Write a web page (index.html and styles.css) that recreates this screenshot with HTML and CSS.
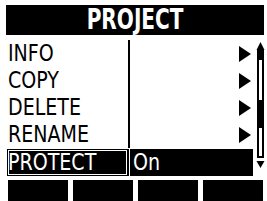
FILE: index.html
```html
<!DOCTYPE html>
<html lang="en">
<head>
    <meta charset="UTF-8">
    <title>PROJECT</title>
    <link rel="stylesheet" href="styles.css">
</head>
<body>
    <div class="screen">
        <div class="title"><span>PROJECT</span></div>

        <div class="body">
            <div class="menu">
                <div class="row">
                    <div class="label"><span>INFO</span></div>
                    <div class="value"></div>
                    <div class="more"><i class="arrow"></i></div>
                </div>
                <div class="row">
                    <div class="label"><span>COPY</span></div>
                    <div class="value"></div>
                    <div class="more"><i class="arrow"></i></div>
                </div>
                <div class="row">
                    <div class="label"><span>DELETE</span></div>
                    <div class="value"></div>
                    <div class="more"><i class="arrow"></i></div>
                </div>
                <div class="row">
                    <div class="label"><span>RENAME</span></div>
                    <div class="value"></div>
                    <div class="more"><i class="arrow"></i></div>
                </div>
                <div class="row selected">
                    <div class="label"><span>PROTECT</span></div>
                    <div class="value"><span>On</span></div>
                    <div class="more"></div>
                </div>
            </div>

            <!-- scroll indicator -->
            <svg class="scroll" width="9" height="127" viewBox="0 0 9 127">
                <polygon points="4.5,0 0.5,8 8.5,8" fill="#000"/>
                <rect x="1" y="8" width="7" height="108" fill="#000"/>
                <rect x="3" y="18" width="3" height="40" fill="#fff"/>
                <rect x="3" y="86" width="3" height="28" fill="#fff"/>
                <polygon points="0.5,119 8.5,119 4.5,126" fill="#000"/>
            </svg>
        </div>

        <div class="keys">
            <div class="key"></div>
            <div class="key"></div>
            <div class="key"></div>
            <div class="key"></div>
        </div>
    </div>
</body>
</html>
```

FILE: styles.css
```css
body {
    margin: 0;
    background-color: #fff;
    font-family: "DejaVu Sans Condensed", "DejaVu Sans", sans-serif;
    color: #000;
}
.screen {
    width: 267px;
    height: 201px;
    overflow: hidden;
    padding-top: 5px;
    box-sizing: border-box;
}
.title {
    margin: 0 3px 0 6px;
    height: 30px;
    background-color: #000;
    color: #fff;
    font-weight: bold;
    font-size: 24px;
    line-height: 30px;
    display: flex;
    justify-content: center;
}
.title span {
    display: inline-block;
    transform: scale(0.93, 1.15);
}
.body {
    display: flex;
    margin-top: 5px;
    padding-left: 7px;
}
.menu {
    width: 246px;
}
.row {
    display: grid;
    grid-template-columns: 121px 1fr 14px;
    height: 27px;
    font-size: 23px;
    line-height: 27px;
}
.label span, .value span {
    display: inline-block;
    transform: scaleX(0.92);
    transform-origin: left center;
}
.label {
    padding-left: 1px;
    white-space: nowrap;
}
.value {
    border-left: 2px solid #000;
    padding-left: 3px;
}
.more {
    display: flex;
    align-items: center;
}
.arrow {
    display: block;
    width: 0;
    height: 0;
    border-left: 12px solid #000;
    border-top: 8px solid transparent;
    border-bottom: 8px solid transparent;
}
.selected {
    margin-top: 1px;
    background-color: #000;
    color: #fff;
}
.selected .label {
    outline: 1px solid #fff;
    outline-offset: -2px;
}
.selected .value {
    border-left: 1px solid #fff;
    margin-left: 1px;
}
.scroll {
    margin-left: 3px;
    margin-top: 2px;
}
.keys {
    display: flex;
    gap: 5px;
    margin: 4px 4px 0 8px;
}
.key {
    flex: 1;
    height: 24px;
    background-color: #000;
}
```
